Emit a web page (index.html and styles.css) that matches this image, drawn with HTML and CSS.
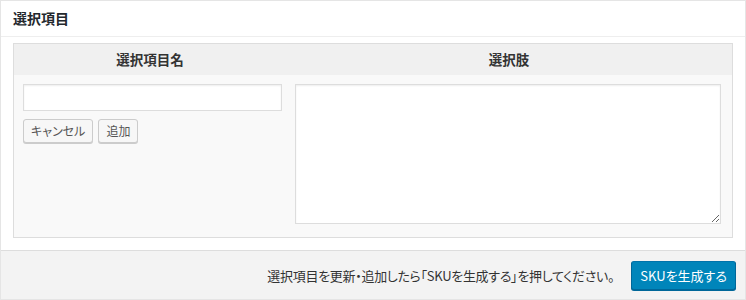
FILE: index.html
```html
<!DOCTYPE html>
<html>
<head>
    <title>選択項目</title>
    <meta charset="utf-8">
    <link rel="stylesheet" href="styles.css">
</head>
<body>
    <div class="postbox">
        <h2 class="hndle">選択項目</h2>

        <div class="inside">
            <div class="option-table">
                <div class="th">選択項目名</div>
                <div class="th">選択肢</div>

                <div class="td">
                    <input type="text" class="option-name">
                    <div class="option-buttons">
                        <button class="button">キャンセル</button>
                        <button class="button">追加</button>
                    </div>
                </div>
                <div class="td">
                    <textarea class="option-values"></textarea>
                </div>
            </div>
        </div>

        <div class="major-actions">
            <span class="hint">選択項目を更新・追加したら「SKUを生成する」を押してください。</span>
            <button class="button button-primary">SKUを生成する</button>
        </div>
    </div>
</body>
</html>
```

FILE: styles.css
```css
* {
    margin: 0;
    padding: 0;
    box-sizing: border-box;
}

body {
    background: #fff;
    color: #444;
    font-family: "Noto Sans CJK JP", "Noto Sans", sans-serif;
    font-size: 13px;
    font-feature-settings: "palt";
}

.postbox {
    width: 746px;
    height: 300px;
    border: 1px solid #e5e5e5;
    display: flex;
    flex-direction: column;
}

.hndle {
    height: 36px;
    padding: 0 12px;
    font-size: 14px;
    font-weight: bold;
    line-height: 35px;
    color: #23282d;
    border-bottom: 1px solid #eee;
}

.inside {
    padding: 6px 12px 12px;
}

.option-table {
    display: grid;
    grid-template-columns: 272px 1fr;
    border: 1px solid #ddd;
    background: #f9f9f9;
}

.th {
    height: 31px;
    line-height: 30px;
    background: #f0f0f0;
    text-align: center;
    font-size: 13.5px;
    font-weight: bold;
    color: #333;
}

.td {
    height: 162px;
    padding: 9px 11px 12px 9px;
}

.option-name {
    display: block;
    width: 259px;
    height: 27px;
    border: 1px solid #ddd;
    background: #fff;
    box-shadow: inset 0 1px 2px rgba(0, 0, 0, 0.07);
}

.option-buttons {
    display: flex;
    gap: 5px;
    margin-top: 8px;
}

.button {
    height: 24px;
    padding: 0 7px;
    border: 1px solid #ccc;
    border-radius: 3px;
    background: #f7f7f7;
    box-shadow: 0 1px 0 #ccc;
    color: #555;
    font-family: inherit;
    font-size: 12px;
    font-feature-settings: "palt";
    line-height: 22px;
}

.option-values {
    display: block;
    width: 100%;
    height: 140px;
    border: 1px solid #ddd;
    background: #fff;
    box-shadow: inset 0 1px 2px rgba(0, 0, 0, 0.07);
}

.major-actions {
    margin-top: auto;
    height: 49px;
    padding: 0 9px 0 0;
    border-top: 1px solid #ddd;
    background: #f3f3f3;
    display: flex;
    align-items: center;
    justify-content: flex-end;
    gap: 17px;
}

.hint {
    color: #333;
    letter-spacing: -0.3px;
}

.button-primary {
    height: 29px;
    padding: 0 8px;
    border-color: #0073aa #006799 #006799;
    background: #0085ba;
    box-shadow: 0 1px 0 #006799;
    color: #fff;
    font-size: 13px;
    line-height: 27px;
}
```
